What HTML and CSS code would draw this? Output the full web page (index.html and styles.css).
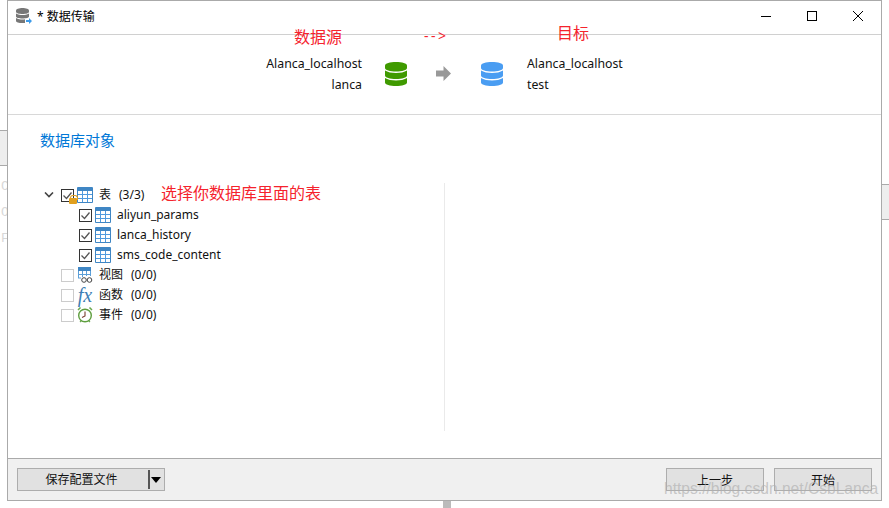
FILE: index.html
```html
<!DOCTYPE html>
<html lang="zh-CN">
<head>
    <meta charset="UTF-8">
    <meta name="viewport" content="width=device-width, initial-scale=1.0">
    <title>数据传输</title>
    <link rel="stylesheet" href="styles.css">
</head>
<body>
    <svg class="defs" width="0" height="0">
        <defs>
            <symbol id="table" viewBox="0 0 16 16">
                <rect x="0" y="0" width="16" height="16" rx="1" fill="#3f86c4"/>
                <rect x="1" y="4" width="14" height="11" fill="#fff"/>
                <path d="M5.500 4v11M10.500 4v11M1 7.500h14M1 11.500h14" stroke="#4f9ade" stroke-width="1" fill="none"/>
            </symbol>
            <symbol id="db" viewBox="0 0 22 24">
                <path d="M0 3.500C0 1.500 5 0 11 0s11 1.500 11 3.500v2.500C22 8 17 9.500 11 9.500S0 8 0 6z"/>
                <path d="M0 8.500C2.500 10.200 7 11 11 11s8.500-.8 11-2.500v5C22 15.500 17 17 11 17S0 15.500 0 13.500z"/>
                <path d="M0 16c2.500 1.700 7 2.500 11 2.500s8.500-.8 11-2.500v4.500C22 22.500 17 24 11 24S0 22.500 0 20.500z"/>
            </symbol>
        </defs>
    </svg>

    <div class="backdrop-box left-box"></div>
    <div class="backdrop-box right-box"></div>
    <div class="backdrop-box bottom-box"></div>
    <span class="backdrop-char char-c">C</span>
    <span class="backdrop-char char-o">O</span>
    <span class="backdrop-char char-f">F</span>

    <div class="window">
        <div class="titlebar">
            <div class="title">
                <svg class="app-icon" width="16" height="16" viewBox="0 0 16 16">
                    <path fill="#777" d="M0 2.500C0 1 3 0 6.500 0S13 1 13 2.500v1.200C13 5 10 6 6.500 6S0 5 0 3.700z"/>
                    <path fill="#777" d="M0 5.500C2 6.800 4.500 7 6.500 7s4.500-.2 6.500-1.500v3C13 9.800 10 10.500 6.500 10.500S0 9.800 0 8.500z"/>
                    <path fill="#777" d="M0 10c2 1.300 4.500 1.500 6.500 1.500.8 0 1.500 0 2.500-.2V15c-.8.100-1.700.100-2.500.100C3 15 0 14.300 0 13z"/>
                    <path fill="#3d9be9" d="M10 12h3v-2l3 3-3 3v-2h-3z"/>
                </svg>
                <span>* 数据传输</span>
            </div>
            <div class="win-controls">
                <svg width="12" height="12" viewBox="0 0 12 12"><path d="M1 6.500h10" stroke="#000" fill="none"/></svg>
                <svg width="12" height="12" viewBox="0 0 12 12"><rect x="1.500" y="1.500" width="9" height="9" stroke="#000" fill="none"/></svg>
                <svg width="12" height="12" viewBox="0 0 12 12"><path d="M1 1l10 10M11 1L1 11" stroke="#000" fill="none"/></svg>
            </div>
        </div>

        <div class="transfer">
            <div class="conn conn-source">
                <div>Alanca_localhost</div>
                <div>lanca</div>
            </div>
            <svg class="db-icon db-green" width="22" height="24"><use href="#db"/></svg>
            <svg class="flow-arrow" width="15" height="15" viewBox="0 0 15 15">
                <path fill="#999" d="M0 4.500h7.500V0L15 7.500 7.500 15v-4.500H0z"/>
            </svg>
            <svg class="db-icon db-blue" width="22" height="24"><use href="#db"/></svg>
            <div class="conn">
                <div>Alanca_localhost</div>
                <div>test</div>
            </div>
        </div>

        <div class="objects">
            <h3 class="objects-title">数据库对象</h3>
            <div class="tree-wrap">
                <ul class="tree">
                    <li class="row">
                        <svg class="chevron" width="10" height="6" viewBox="0 0 10 6"><path d="M1 .5l4 4 4-4" stroke="#444" stroke-width="1.600" fill="none"/></svg>
                        <span class="check checked"><svg width="13" height="13" viewBox="0 0 13 13"><path d="M2.500 6.500l3 3 5-6" stroke="#555" stroke-width="1.300" fill="none"/></svg></span>
                        <span class="lock"></span>
                        <svg class="node-icon" width="16" height="16"><use href="#table"/></svg>
                        <span class="label">表</span><span class="count">(3/3)</span>
                    </li>
                    <li class="row child">
                        <span class="check checked"><svg width="13" height="13" viewBox="0 0 13 13"><path d="M2.500 6.500l3 3 5-6" stroke="#555" stroke-width="1.300" fill="none"/></svg></span>
                        <svg class="node-icon" width="16" height="16"><use href="#table"/></svg>
                        <span class="label">aliyun_params</span>
                    </li>
                    <li class="row child">
                        <span class="check checked"><svg width="13" height="13" viewBox="0 0 13 13"><path d="M2.500 6.500l3 3 5-6" stroke="#555" stroke-width="1.300" fill="none"/></svg></span>
                        <svg class="node-icon" width="16" height="16"><use href="#table"/></svg>
                        <span class="label">lanca_history</span>
                    </li>
                    <li class="row child">
                        <span class="check checked"><svg width="13" height="13" viewBox="0 0 13 13"><path d="M2.500 6.500l3 3 5-6" stroke="#555" stroke-width="1.300" fill="none"/></svg></span>
                        <svg class="node-icon" width="16" height="16"><use href="#table"/></svg>
                        <span class="label">sms_code_content</span>
                    </li>
                    <li class="row">
                        <span class="check"></span>
                        <svg class="node-icon" width="16" height="16" viewBox="0 0 16 16">
                            <rect x="1" y="0" width="13" height="4" fill="#3f86c4"/>
                            <path d="M1.500 4v7M5.500 4v6M9.500 4v5M13.500 4v5M1 7.500h13M1 11h3" stroke="#5c9fd8" fill="none"/>
                            <circle cx="7" cy="13" r="2.300" fill="#fff" stroke="#444"/>
                            <circle cx="12.500" cy="13" r="2.300" fill="#fff" stroke="#444"/>
                        </svg>
                        <span class="label">视图</span><span class="count">(0/0)</span>
                    </li>
                    <li class="row">
                        <span class="check"></span>
                        <span class="fx-icon">fx</span>
                        <span class="label">函数</span><span class="count">(0/0)</span>
                    </li>
                    <li class="row">
                        <span class="check"></span>
                        <svg class="node-icon" width="16" height="16" viewBox="0 0 16 16">
                            <path d="M1 3l2.500-2.500M15 3L12.500.5" stroke="#6aa84f" stroke-width="1.500" fill="none"/>
                            <circle cx="8" cy="8.500" r="6.300" fill="#fff" stroke="#5e9e3e" stroke-width="1.400"/>
                            <path d="M8 4.500v4.500l-3 1.500" stroke="#7a3b2e" stroke-width="1.100" fill="none"/>
                            <path d="M3 15l1.500-1.500M13 15l-1.500-1.500" stroke="#6aa84f" stroke-width="1.200" fill="none"/>
                        </svg>
                        <span class="label">事件</span><span class="count">(0/0)</span>
                    </li>
                </ul>
                <div class="detail-pane"></div>
            </div>
        </div>

        <div class="footer">
            <div class="split-btn">
                <span class="split-main">保存配置文件</span>
                <span class="split-caret"></span>
            </div>
            <div class="footer-right">
                <button class="btn" type="button">上一步</button>
                <button class="btn" type="button">开始</button>
            </div>
        </div>
    </div>

    <!-- hand-written notes on top of the dialog -->
    <span class="note note-source">数据源</span>
    <span class="note note-arrow">--&gt;</span>
    <span class="note note-target">目标</span>
    <span class="note note-tables">选择你数据库里面的表</span>
    <span class="watermark">https://blog.csdn.net/CsbLanca</span>
</body>
</html>
```

FILE: styles.css
```css
* {
    box-sizing: border-box;
}
body {
    position: relative;
    margin: 0;
    width: 889px;
    height: 508px;
    overflow: hidden;
    background-color: #fff;
    font-family: "Noto Sans", "Noto Sans CJK SC", sans-serif;
    font-size: 12px;
    color: #111;
}
.defs {
    position: absolute;
}
/* bits of the main window showing behind the dialog */
.backdrop-box {
    position: absolute;
    background-color: #eee;
    border: 1px solid #aaa;
}
.left-box {
    left: -2px;
    top: 130px;
    width: 10px;
    height: 36px;
}
.right-box {
    left: 878px;
    top: 184px;
    width: 13px;
    height: 36px;
}
.bottom-box {
    left: 443px;
    top: 500px;
    width: 8px;
    height: 10px;
    background-color: #bbb;
    border: none;
}
.backdrop-char {
    position: absolute;
    left: 1px;
    font-family: "Liberation Mono", monospace;
    font-size: 13px;
    line-height: 14px;
    color: #d8d8d8;
}
.char-c {
    top: 180px;
}
.char-o {
    top: 206px;
}
.char-f {
    top: 232px;
}
.window {
    position: relative;
    display: flex;
    flex-direction: column;
    margin-left: 7px;
    width: 875px;
    height: 501px;
    background-color: #fff;
    border: 1px solid #aaa;
}
.titlebar {
    display: flex;
    justify-content: space-between;
    align-items: center;
    height: 34px;
    padding-bottom: 4px;
    border-bottom: 1px solid #d0d0d0;
    flex-shrink: 0;
}
.title {
    display: flex;
    align-items: center;
    gap: 5px;
    padding-left: 8px;
    color: #000;
}
.win-controls {
    display: flex;
    gap: 34px;
    padding-right: 17px;
}
.transfer {
    display: flex;
    align-items: center;
    height: 80px;
    padding-left: 254px;
    padding-bottom: 2px;
    border-bottom: 1px solid #d8d8d8;
    flex-shrink: 0;
}
.conn {
    width: 100px;
    font-size: 12.300px;
    line-height: 21px;
}
.conn-source {
    text-align: right;
}
.db-green {
    margin: 0 29px 0 23px;
    fill: #3f9a00;
}
.db-blue {
    margin: 0 24px 0 30px;
    fill: #4a9df2;
}
.objects {
    flex: 1;
    display: flex;
    flex-direction: column;
    padding: 15px 0 27px 32px;
}
.objects-title {
    margin: 0;
    font-size: 15px;
    font-weight: 400;
    line-height: 20px;
    color: #0078d7;
}
.tree-wrap {
    flex: 1;
    display: flex;
    margin-top: 35px;
}
.tree {
    list-style: none;
    margin: 0;
    padding: 0;
    width: 404px;
}
.row {
    position: relative;
    display: flex;
    align-items: center;
    height: 20px;
    padding-left: 21px;
}
.row.child {
    padding-left: 39px;
}
.chevron {
    position: absolute;
    left: 4px;
    top: 7px;
}
.check {
    display: flex;
    width: 13px;
    height: 13px;
    border: 1px solid #ccc;
    background-color: #fff;
    flex-shrink: 0;
}
.check svg {
    margin: -1px;
}
.check.checked {
    border-color: #333;
}
/* small padlock over the parent checkbox */
.lock {
    position: absolute;
    left: 29px;
    top: 13px;
    width: 8px;
    height: 6px;
    background-color: #e0a020;
    border-radius: 1px;
    z-index: 1;
}
.lock::before {
    content: "";
    position: absolute;
    left: 1px;
    top: -3px;
    width: 6px;
    height: 4px;
    border: 1px solid #e0a020;
    border-bottom: none;
    border-radius: 3px 3px 0 0;
}
.node-icon {
    margin-left: 3px;
    flex-shrink: 0;
}
.fx-icon {
    width: 16px;
    margin-left: 3px;
    font-family: "Liberation Serif", serif;
    font-style: italic;
    font-size: 20px;
    line-height: 20px;
    color: #3f7fb5;
    text-align: center;
}
.label {
    margin-left: 6px;
    margin-bottom: 2px;
    white-space: nowrap;
}
.count {
    margin-left: 8px;
    margin-bottom: 2px;
}
.detail-pane {
    margin-top: -2px;
    border-left: 1px solid #eaeaea;
}
.footer {
    display: flex;
    justify-content: space-between;
    align-items: center;
    height: 42px;
    padding: 0 9px;
    background-color: #f0f0f0;
    border-top: 1px solid #aaa;
    flex-shrink: 0;
}
.split-btn {
    display: flex;
    width: 148px;
    height: 23px;
    background-color: #e1e1e1;
    border: 1px solid #adadad;
}
.split-main {
    flex: 1;
    text-align: center;
    line-height: 21px;
    padding-right: 3px;
}
.split-caret {
    position: relative;
    width: 16px;
    border-left: 2px solid #555;
    margin: 1px 0;
}
.split-caret::after {
    content: "";
    position: absolute;
    left: 1px;
    top: 7px;
    border-left: 5px solid transparent;
    border-right: 5px solid transparent;
    border-top: 6px solid #000;
}
.footer-right {
    display: flex;
    gap: 10px;
}
.btn {
    width: 98px;
    height: 23px;
    padding: 0;
    font-family: inherit;
    font-size: 12px;
    color: #111;
    background-color: #e1e1e1;
    border: 1px solid #adadad;
}
.note {
    position: absolute;
    color: #f5232d;
    font-size: 16px;
    line-height: 20px;
    white-space: nowrap;
}
.note-source {
    left: 294px;
    top: 27px;
}
.note-arrow {
    left: 424px;
    top: 26px;
    font-size: 14px;
    letter-spacing: 2.500px;
}
.note-target {
    left: 557px;
    top: 23px;
}
.note-tables {
    left: 161px;
    top: 183px;
}
.watermark {
    position: absolute;
    left: 664px;
    top: 479px;
    font-family: "Liberation Sans", sans-serif;
    font-size: 15.600px;
    line-height: 20px;
    color: rgba(175, 175, 175, 0.65);
    white-space: nowrap;
}
```
